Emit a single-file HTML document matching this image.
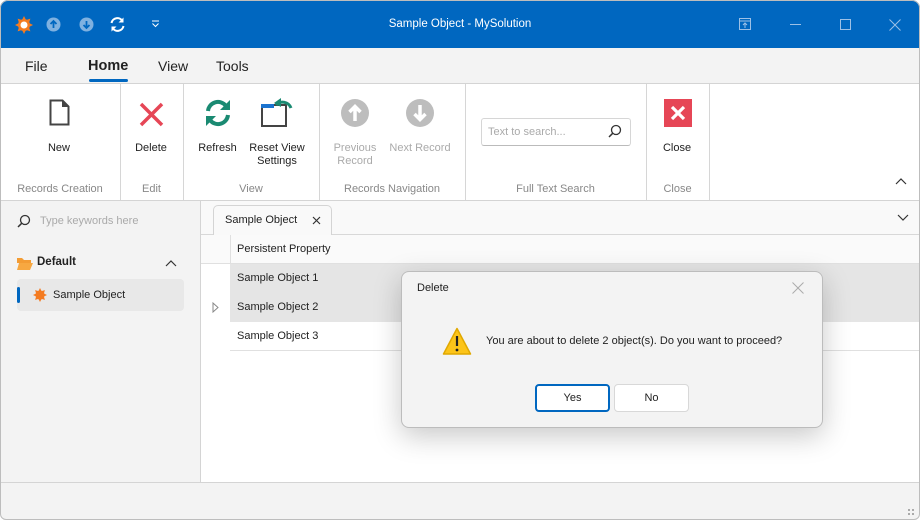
<!DOCTYPE html>
<html><head><meta charset="utf-8"><style>
*{box-sizing:border-box;margin:0;padding:0}
body{width:920px;height:520px;overflow:hidden;font-family:"Liberation Sans",sans-serif;font-size:11px;color:#222;background:#fff;position:relative}
.a{position:absolute}
.win{position:absolute;left:0;top:0;width:920px;height:520px;border-radius:8px 8px 6px 6px;overflow:hidden;background:#fff}
.frame{position:absolute;left:0;top:0;width:920px;height:520px;border:1px solid #bdbdbd;border-radius:8px 8px 6px 6px;pointer-events:none}
.title{left:0;top:0;width:920px;height:48px;background:#0067c0;color:#fff}
.tabs{left:0;top:48px;width:920px;height:36px;background:#f3f3f3;border-bottom:1px solid #d4d4d4;font-size:14px}
.rib{left:0;top:84px;width:920px;height:117px;background:#fff;border-bottom:1px solid #d4d4d4}
.sep{top:84px;width:1px;height:116px;background:#d6d6d6}
.lbl{font-size:11px;color:#888;text-align:center}
.btn{text-align:center;font-size:11px;color:#222}
.dis{color:#aaa}
.left{left:0;top:201px;width:201px;height:281px;background:#f3f3f3;border-right:1px solid #d4d4d4}
.status{left:0;top:482px;width:920px;height:38px;background:#f3f3f3;border-top:1px solid #d4d4d4}
.row{left:230px;width:690px;height:29px;padding:8px 7px;font-size:11px}
</style></head><body><div class="win">
<div class="a title">
 <svg class="a" style="left:14px;top:15px" width="20" height="20" viewBox="0 0 20 20"><g fill="#f47b20"><circle cx="10" cy="10" r="6"/><path d="M10 1l2 4h-4zM10 19l2-4h-4zM1 10l4 2v-4zM19 10l-4 2v-4zM3.6 3.6l4.2 1.4-2.8 2.8zM16.4 16.4l-4.2-1.4 2.8-2.8zM16.4 3.6l-1.4 4.2-2.8-2.8zM3.6 16.4l1.4-4.2 2.8 2.8z"/></g><circle cx="10" cy="10" r="3.5" fill="#fff"/></svg>
 <svg class="a" style="left:46px;top:17px" width="15" height="15"><circle cx="7.5" cy="7.5" r="7" fill="#7fb1e0"/><path d="M7.5 11V4.5M4.5 7l3-3 3 3" stroke="#0067c0" stroke-width="1.8" fill="none"/></svg>
 <svg class="a" style="left:79px;top:17px" width="15" height="15"><circle cx="7.5" cy="7.5" r="7" fill="#7fb1e0"/><path d="M7.5 4v6.5M4.5 8l3 3 3-3" stroke="#0067c0" stroke-width="1.8" fill="none"/></svg>
 <svg class="a" style="left:109px;top:16px" width="17" height="17" viewBox="0 0 17 17"><path d="M2.5 7a6 6 0 0 1 11-2M14.5 10a6 6 0 0 1-11 2" stroke="#fff" stroke-width="2" fill="none"/><path d="M14.5 1.5v5h-5zM2.5 15.5v-5h5z" fill="#fff"/></svg>
 <svg class="a" style="left:151px;top:20px" width="9" height="8"><path d="M1 1h7M1.5 3.5l3 3 3-3" stroke="#fff" fill="none"/></svg>
 <div class="a" style="left:0;width:920px;top:18px;text-align:center;font-size:11.5px">Sample Object - MySolution</div>
 <svg class="a" style="left:739px;top:18px" width="12" height="12"><rect x=".5" y=".5" width="11" height="11" fill="none" stroke="#9cc0e6"/><path d="M.5 3h11M6 10V5M4 7l2-2 2 2" stroke="#9cc0e6" fill="none"/></svg>
 <div class="a" style="left:790px;top:24px;width:11px;height:1px;background:#9cc0e6"></div>
 <div class="a" style="left:840px;top:19px;width:11px;height:11px;border:1px solid #9cc0e6"></div>
 <svg class="a" style="left:889px;top:19px" width="12" height="12"><path d="M.5.5l11 11M11.5.5l-11 11" stroke="#9cc0e6"/></svg>
</div>
<div class="a tabs">
 <span class="a" style="left:25px;top:10px">File</span>
 <span class="a" style="left:88px;top:10px;font-weight:bold;font-size:14.5px">Home</span>
 <div class="a" style="left:89px;top:31px;width:39px;height:3px;background:#0067c0;border-radius:2px"></div>
 <span class="a" style="left:158px;top:10px">View</span>
 <span class="a" style="left:216px;top:10px">Tools</span>
</div>
<div class="a rib">
 <svg class="a" style="left:49px;top:15px" width="22" height="28"><path d="M1.5 1.5h12l6 6v18h-18z" fill="#fff" stroke="#444" stroke-width="2"/><path d="M13 1.5v6.5h6.5" fill="#444"/></svg>
 <div class="a btn" style="left:20px;width:78px;top:58px">New</div>
 <svg class="a" style="left:139px;top:18px" width="25" height="25"><path d="M2 2l21 21M23 2L2 23" stroke="#e64656" stroke-width="3.5"/></svg>
 <div class="a btn" style="left:120px;width:62px;top:58px">Delete</div>
 <svg class="a" style="left:203px;top:14px" width="30" height="30" viewBox="0 0 30 30"><path d="M5 13a10 10 0 0 1 18-5M25 17a10 10 0 0 1-18 5" stroke="#1a8a72" stroke-width="4" fill="none"/><path d="M27 2v10h-10zM3 28v-10h10z" fill="#1a8a72"/></svg>
 <div class="a btn" style="left:190px;width:55px;top:58px">Refresh</div>
 <svg class="a" style="left:260px;top:14px" width="34" height="30" viewBox="0 0 34 30"><rect x="2" y="7" width="24" height="21" fill="none" stroke="#444" stroke-width="2"/><rect x="1" y="6" width="13" height="4" fill="#1b74d0"/><path d="M16 7a9 9 0 0 1 15 3" stroke="#1a8a72" stroke-width="3" fill="none"/><path d="M14 5l7-5v9z" fill="#1a8a72"/></svg>
 <div class="a btn" style="left:244px;width:66px;top:58px;line-height:13px">Reset View Settings</div>
 <svg class="a" style="left:341px;top:15px" width="28" height="28"><circle cx="14" cy="14" r="14" fill="#bdbdbd"/><path d="M14 22V8M8.5 13L14 7.5 19.5 13" stroke="#fff" stroke-width="3.5" fill="none"/></svg>
 <div class="a btn dis" style="left:325px;width:60px;top:58px;line-height:13px">Previous Record</div>
 <svg class="a" style="left:406px;top:15px" width="28" height="28"><circle cx="14" cy="14" r="14" fill="#bdbdbd"/><path d="M14 6v14M8.5 15L14 20.5 19.5 15" stroke="#fff" stroke-width="3.5" fill="none"/></svg>
 <div class="a btn dis" style="left:384px;width:72px;top:58px">Next Record</div>
 <div class="a" style="left:481px;top:34px;width:150px;height:28px;border:1px solid #d6d6d6;border-bottom-color:#bbb;border-radius:3px;background:#fff;font-size:11px;color:#aaa;padding:7px 6px">Text to search...</div>
 <svg class="a" style="left:608px;top:40px" width="14" height="14"><circle cx="8" cy="6" r="4.5" fill="none" stroke="#333" stroke-width="1.3"/><path d="M4.8 9.2L1 13" stroke="#333" stroke-width="1.5"/></svg>
 <div class="a" style="left:664px;top:15px;width:28px;height:28px;background:#e64656"></div>
 <svg class="a" style="left:664px;top:15px" width="28" height="28"><path d="M8 8l12 12M20 8L8 20" stroke="#fff" stroke-width="3.2"/></svg>
 <div class="a btn" style="left:646px;width:62px;top:58px">Close</div>
 <div class="a lbl" style="left:0;width:120px;top:99px">Records Creation</div>
 <div class="a lbl" style="left:120px;width:63px;top:99px">Edit</div>
 <div class="a lbl" style="left:183px;width:136px;top:99px">View</div>
 <div class="a lbl" style="left:319px;width:146px;top:99px">Records Navigation</div>
 <div class="a lbl" style="left:465px;width:181px;top:99px">Full Text Search</div>
 <div class="a lbl" style="left:646px;width:63px;top:99px">Close</div>
 <svg class="a" style="left:895px;top:93px" width="12" height="8"><path d="M1 7l5-5 5 5" stroke="#333" stroke-width="1.2" fill="none"/></svg>
</div>
<div class="a sep" style="left:120px"></div><div class="a sep" style="left:183px"></div><div class="a sep" style="left:319px"></div><div class="a sep" style="left:465px"></div><div class="a sep" style="left:646px"></div><div class="a sep" style="left:709px"></div>
<div class="a left">
 <svg class="a" style="left:17px;top:13px" width="14" height="14"><circle cx="8" cy="6" r="4.5" fill="none" stroke="#333" stroke-width="1.3"/><path d="M4.8 9.2L1 13" stroke="#333" stroke-width="1.5"/></svg>
 <div class="a" style="left:40px;top:14px;font-size:11px;color:#aaa">Type keywords here</div>
 <svg class="a" style="left:17px;top:56px" width="16" height="13"><path d="M0 1h5l2 2h7v3H0z" fill="#f39c34"/><path d="M2 6h14l-3 7H0z" fill="#f7a841"/></svg>
 <div class="a" style="left:37px;top:55px;font-weight:bold;font-size:11.5px">Default</div>
 <svg class="a" style="left:165px;top:58px" width="12" height="8"><path d="M1 7l5-5 5 5" stroke="#333" stroke-width="1.2" fill="none"/></svg>
 <div class="a" style="left:17px;top:78px;width:167px;height:32px;background:#e8e8e8;border-radius:4px"></div>
 <div class="a" style="left:17px;top:86px;width:3px;height:16px;background:#0067c0;border-radius:2px"></div>
 <svg class="a" style="left:33px;top:87px" width="14" height="14" viewBox="0 0 20 20"><g fill="#f47b20"><circle cx="10" cy="10" r="6.5"/><path d="M10 0l2.5 5h-5zM10 20l2.5-5h-5zM0 10l5 2.5v-5zM20 10l-5 2.5v-5zM3 3l5 1.5L4.5 8zM17 17l-5-1.5 3.5-3.5zM17 3l-1.5 5L12 4.5zM3 17l1.5-5L8 15.5z"/></g></svg>
 <div class="a" style="left:53px;top:88px">Sample Object</div>
</div>
<div class="a" style="left:201px;top:201px;width:719px;height:34px;background:#f9f9f9;border-bottom:1px solid #d8d8d8"></div>
<div class="a" style="left:213px;top:205px;width:119px;height:31px;background:#f9f9f9;border:1px solid #d4d4d4;border-bottom:none;border-radius:5px 5px 0 0;padding:8px 11px">Sample Object</div>
<svg class="a" style="left:312px;top:216px" width="9" height="9"><path d="M1 1l7 7M8 1L1 8" stroke="#333" stroke-width="1.2"/></svg>
<svg class="a" style="left:897px;top:214px" width="12" height="8"><path d="M1 1l5 5 5-5" stroke="#333" stroke-width="1.2" fill="none"/></svg>
<div class="a" style="left:201px;top:235px;width:719px;height:29px;background:#fafafa;border-bottom:1px solid #e0e0e0"></div>
<div class="a" style="left:230px;top:235px;width:1px;height:116px;background:#e0e0e0"></div>
<div class="a" style="left:237px;top:243px">Persistent Property</div>
<div class="a row" style="top:264px;background:#e5e5e5">Sample Object 1</div>
<div class="a row" style="top:293px;background:#e5e5e5">Sample Object 2</div>
<div class="a row" style="top:322px;background:#fff;border-bottom:1px solid #e0e0e0">Sample Object 3</div>
<svg class="a" style="left:212px;top:302px" width="8" height="11"><path d="M1 1l5 4.5L1 10z" fill="none" stroke="#888"/></svg>
<div class="a status">
 <svg class="a" style="left:907px;top:25px" width="8" height="8"><g fill="#aaa"><rect x="1" y="1" width="2" height="2"/><rect x="5" y="1" width="2" height="2"/><rect x="1" y="5" width="2" height="2"/><rect x="5" y="5" width="2" height="2"/></g></svg>
</div>
<div class="a" style="left:401px;top:271px;width:422px;height:157px;background:#f3f3f3;border:1px solid #bcbcbc;border-radius:8px;box-shadow:0 8px 28px rgba(0,0,0,.22)">
 <div class="a" style="left:15px;top:10px">Delete</div>
 <svg class="a" style="left:390px;top:10px" width="12" height="12"><path d="M.5.5l11 11M11.5.5l-11 11" stroke="#aaa"/></svg>
 <svg class="a" style="left:40px;top:55px" width="30" height="29" viewBox="0 0 30 29"><path d="M15 1.5L28.5 27H1.5z" fill="#fcc419" stroke="#e0a800" stroke-width="1.5" stroke-linejoin="round"/><path d="M15 9v10" stroke="#222" stroke-width="2.2"/><circle cx="15" cy="23" r="1.4" fill="#222"/></svg>
 <div class="a" style="left:84px;top:63px">You are about to delete 2 object(s). Do you want to proceed?</div>
 <div class="a" style="left:133px;top:112px;width:75px;height:28px;background:#fff;border:2px solid #0067c0;border-radius:4px;text-align:center;padding-top:6px">Yes</div>
 <div class="a" style="left:212px;top:112px;width:75px;height:28px;background:#fff;border:1px solid #d8d8d8;border-radius:4px;text-align:center;padding-top:7px">No</div>
</div>
</div><div class="frame"></div></body></html>
